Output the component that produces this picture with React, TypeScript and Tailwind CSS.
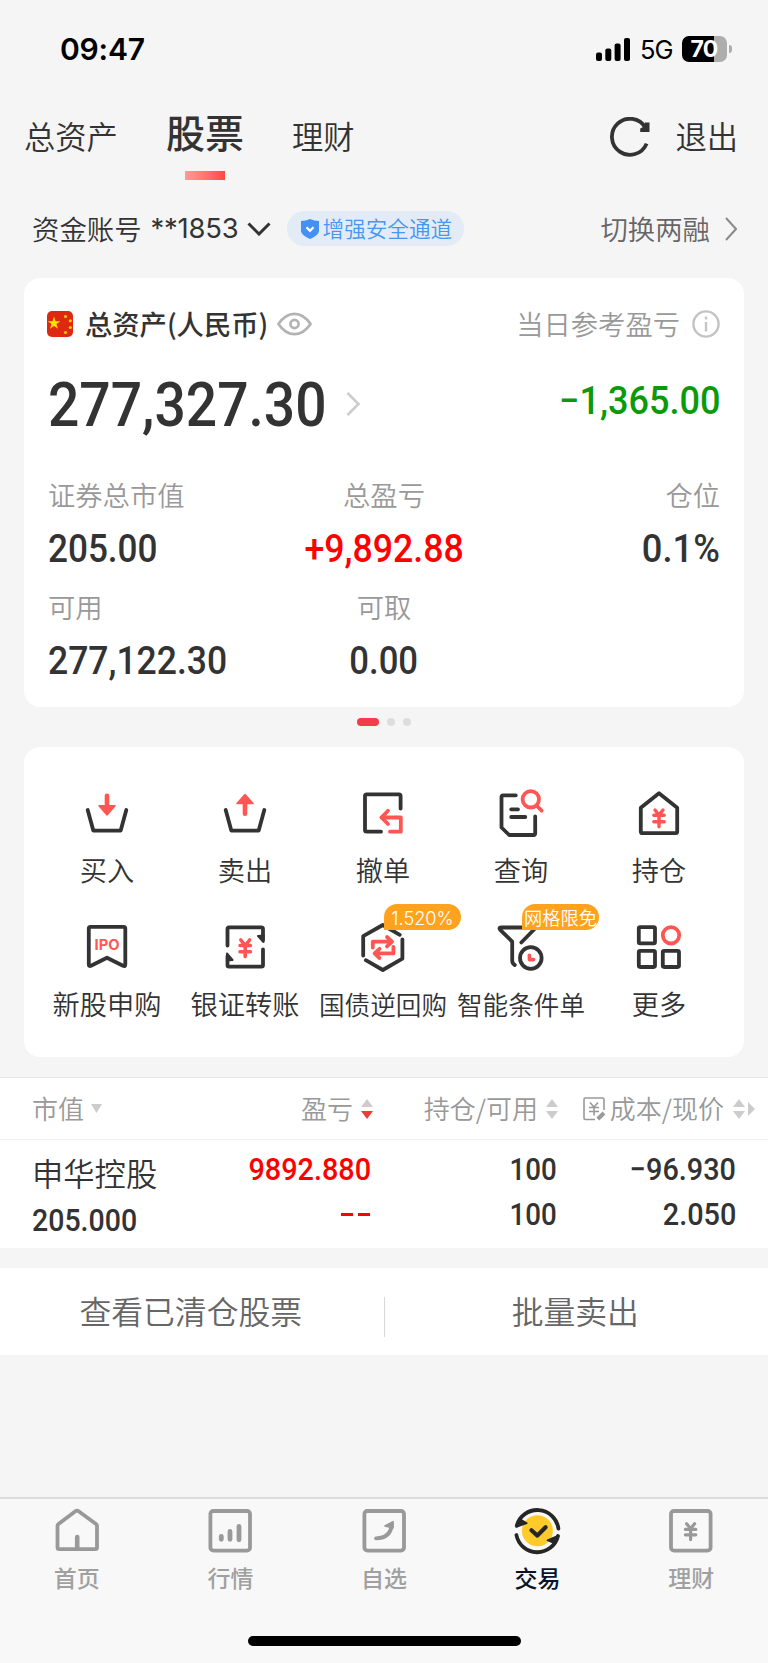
import React from 'react';
import clsx from 'clsx';

interface NumProps {
  value: string;
  className?: string;
}

interface Action {
  label: string;
  icon: React.ReactNode;
  badge?: string;
  compact?: boolean;
}

interface IconProps {
  children: React.ReactNode;
  className?: string;
}

const INK = '#333333';
const RED = '#ff5654';
const GRAY = '#999999';

// Narrow digits used for all amounts
const Num: React.FC<NumProps> = ({ value, className }) => (
  <span className={clsx('inline-block whitespace-nowrap font-[Roboto,sans-serif] font-medium leading-none', className)}>
    {value}
  </span>
);

const Icon: React.FC<IconProps> = ({ children, className }) => (
  <svg
    viewBox="0 0 48 48"
    fill="none"
    stroke={INK}
    strokeWidth="3.8"
    strokeLinecap="round"
    strokeLinejoin="round"
    className={clsx('h-12 w-12 shrink-0 overflow-visible', className)}
  >
    {children}
  </svg>
);

const actions: Action[] = [
  {
    label: '买入',
    icon: (
      <Icon>
        <path d="M4.7 22 L10.3 42.6 H37.7 L43.3 22" />
        <path d="M24 7.8 V18" stroke={RED} strokeWidth="4.6" />
        <path d="M16 17.8 H32 L24 27 Z" fill={RED} stroke={RED} strokeWidth="1.5" />
      </Icon>
    ),
  },
  {
    label: '卖出',
    icon: (
      <Icon>
        <path d="M4.7 22 L10.3 42.6 H37.7 L43.3 22" />
        <path d="M24 15 V25.7" stroke={RED} strokeWidth="4.6" />
        <path d="M16 15.5 H32 L24 6.5 Z" fill={RED} stroke={RED} strokeWidth="1.5" />
      </Icon>
    ),
  },
  {
    label: '撤单',
    icon: (
      <Icon>
        <path d="M41.6 20.5 V8 Q41.6 6.3 40 6.3 H7.7 Q6 6.3 6 8 V42 Q6 43.7 7.7 43.7 H22" />
        <path d="M22.5 29.5 H41.8 V43.7 H31" stroke={RED} />
        <path d="M29 22.8 L22.5 29.5 L29 36" stroke={RED} />
      </Icon>
    ),
  },
  {
    label: '查询',
    icon: (
      <Icon>
        <path d="M18.8 7.3 H6.2 Q4.5 7.3 4.5 9 V39.5 L12.2 47 H36.5 Q38.2 47 38.2 45.3 V28.5" />
        <path d="M14.2 21.3 H21 M14.2 29 H28.3" />
        <circle cx="33.8" cy="11.3" r="8.2" stroke={RED} />
        <path d="M40.1 18 L44.6 22.6" stroke={RED} />
      </Icon>
    ),
  },
  {
    label: '持仓',
    icon: (
      <Icon>
        <path d="M24 5.3 L42.2 19.7 V43.6 Q42.2 45.2 40.6 45.2 H7.4 Q5.8 45.2 5.8 43.6 V19.7 Z" />
        <path d="M20 22 L24 27 L28 22 M24 27 V38.8 M18.8 27.2 H29.2 M18.8 33.8 H29.2" stroke={RED} strokeWidth="3.4" />
      </Icon>
    ),
  },
  {
    label: '新股申购',
    icon: (
      <Icon>
        <path d="M7.5 4.8 H40.7 Q42.3 4.8 42.3 6.4 V42.5 Q42.3 44.8 40 43.8 L24 35.7 L8 43.8 Q5.8 44.8 5.8 42.5 V6.4 Q5.8 4.8 7.5 4.8 Z" />
        <text x="24" y="28" textAnchor="middle" fill={RED} stroke="none" fontFamily="Inter, sans-serif" fontSize="15" fontWeight="700" textLength="25" lengthAdjust="spacingAndGlyphs">
          IPO
        </text>
      </Icon>
    ),
  },
  {
    label: '银证转账',
    icon: (
      <Icon>
        <path d="M6.5 23.5 V7 Q6.5 5.4 8 5.4 H40.4 Q42 5.4 42 7 V18" />
        <path d="M42 27.5 V43 Q42 44.6 40.4 44.6 H8 Q6.5 44.6 6.5 43 V34" />
        <path d="M37 14 L42.5 13.5 V20 Z M11.5 38 L6 38.5 V31.5 Z" fill={INK} strokeWidth="2" />
        <path d="M19.8 18 L24.2 23.5 L28.6 18 M24.2 23 V34.6 M19 23.5 H29.4 M19 29.8 H29.4" stroke={RED} strokeWidth="3.6" />
      </Icon>
    ),
  },
  {
    label: '国债逆回购',
    badge: '1.520%',
    compact: true,
    icon: (
      <Icon>
        <path d="M4.2 33.5 V14.2 L23.8 3 L40.8 12.8" />
        <path d="M43.4 17.5 V36.6 L23.8 48 L6.8 38.2" />
        <path d="M13.8 25.6 V19.7 H32 M28 15 L33 19.7 L28 24.4" stroke={RED} strokeWidth="3.8" />
        <path d="M34.4 25 V31.4 H16.5 M20.5 26.8 L15.6 31.4 L20.5 36" stroke={RED} strokeWidth="3.8" />
      </Icon>
    ),
  },
  {
    label: '智能条件单',
    badge: '网格限免',
    compact: true,
    icon: (
      <Icon>
        <path d="M38.5 6 L24.3 20.5" />
        <path d="M38.5 5.5 H4 Q1.4 5.5 3.2 7.8 L15.2 19.6 V38.5 Q15.2 41.5 17.8 43" />
        <circle cx="33.8" cy="36" r="10.8" />
        <path d="M32.4 33.2 V37.6 H36.6" stroke={RED} strokeWidth="3.6" />
      </Icon>
    ),
  },
  {
    label: '更多',
    icon: (
      <Icon>
        <rect x="3.8" y="5.2" width="16.2" height="16.2" rx="1.4" />
        <rect x="3.8" y="28.8" width="16.2" height="16.2" rx="1.4" />
        <rect x="27.8" y="28.8" width="16.2" height="16.2" rx="1.4" />
        <circle cx="36" cy="13.3" r="8.2" stroke={RED} />
      </Icon>
    ),
  },
];

const tabs = [
  {
    label: '首页',
    icon: (
      <>
        <path d="M22.4 5.2 Q24 4 25.6 5.2 L43 18 Q44 18.8 44 20 V41.5 Q44 43.2 42.3 43.2 H6.2 Q4.5 43.2 4.5 41.5 V20 Q4.5 18.8 5.5 18 Z" />
        <path d="M24.2 31 V42" strokeWidth="4.6" />
      </>
    ),
  },
  {
    label: '行情',
    icon: (
      <>
        <rect x="4.4" y="5" width="39.6" height="39.6" rx="3" />
        <path d="M15.3 30.5 V33.3 M24 25.5 V33.3 M33 20.5 V33.8" strokeWidth="4.8" />
      </>
    ),
  },
  {
    label: '自选',
    icon: (
      <>
        <rect x="4.4" y="5" width="39.6" height="39.6" rx="3" />
        <path d="M16 32.3 C26.5 32 31.2 27 31.8 18.5" />
        <path d="M25 20 L33 15.6 V22 Z" fill={GRAY} strokeWidth="1.6" />
      </>
    ),
  },
  {
    label: '交易',
    active: true,
    icon: (
      <>
        <circle cx="23.4" cy="24.7" r="15.5" fill="#ffcb2b" stroke="none" />
        <g stroke="#262626">
          <path d="M2.8 19.5 A21.3 21.3 0 0 1 44.4 22.5" />
          <path d="M44 30 A21.3 21.3 0 0 1 2.4 29" />
          <path d="M2.2 21 L5.8 13 L12.8 17.2 Z M44.6 29.6 L41 37.4 L33.4 34.2 Z" fill="#262626" strokeWidth="1.6" />
          <path d="M17.4 24.3 L23.4 29.6 L31.6 21.3" strokeWidth="4.2" />
        </g>
      </>
    ),
  },
  {
    label: '理财',
    icon: (
      <>
        <rect x="4" y="5" width="39.6" height="39.6" rx="3" />
        <path d="M19.6 17.8 L23.6 22.6 L27.6 17.8 M23.6 22.6 V33.6 M18.4 23.4 H28.8 M18.4 28.8 H28.8" strokeWidth="3.2" />
      </>
    ),
  },
];

// Up/down sort arrows in the table header
const SortArrows: React.FC<{ active?: boolean }> = ({ active }) => (
  <svg viewBox="0 0 12 20" className="h-5 w-3 shrink-0">
    <path d="M6 0 L12 8 H0 Z" fill="#cccccc" />
    <path d="M6 20 L12 12 H0 Z" fill={active ? '#f03a3a' : '#cccccc'} />
  </svg>
);

const StatusBar = () => (
  <div className="flex h-[100px] shrink-0 items-center justify-between pl-[60px] pr-[36px] text-black">
    <span className="mb-[2px] font-[Inter,sans-serif] text-[30px] font-semibold leading-none tracking-[-0.2px]">09:47</span>
    <div className="mb-[2px] flex items-center">
      <svg viewBox="0 0 34 23" className="h-[23px] w-[34px]">
        <rect x="0" y="14.5" width="6" height="8.5" rx="2" />
        <rect x="9.3" y="10.5" width="6" height="12.5" rx="2" />
        <rect x="18.6" y="5.5" width="6" height="17.5" rx="2" />
        <rect x="28" y="0" width="6" height="23" rx="2" />
      </svg>
      <span className="ml-[10px] w-[33px] pt-px font-[Inter,sans-serif] text-[25.5px] font-normal leading-none tracking-[-1px]">5G</span>
      <div className="ml-[9px] flex h-[26px] w-[45px] items-center justify-center rounded-[7px] bg-linear-to-r from-black from-71% to-[#adadad] to-71%">
        <span className="-ml-px font-[Inter,sans-serif] text-[23px] font-bold leading-none tracking-[-0.8px] text-white">70</span>
      </div>
      <div className="ml-[2px] h-2 w-[3px] rounded-r-full bg-[#adadad]" />
    </div>
  </div>
);

const TopTabs = () => (
  <div className="flex h-20 shrink-0 items-start pl-[24px] pr-[30px] text-[31.3px] leading-none text-[#333]">
    <div className="flex h-[71px] items-center">总资产</div>
    <div className="ml-[48px] flex h-20 flex-col items-center justify-between">
      <div className="flex h-[62px] items-center text-[39px] font-medium">股票</div>
      <div className="h-[9px] w-10 bg-linear-to-r from-[#ff9a9a] to-[#ff4540]" />
    </div>
    <div className="ml-[48px] flex h-[71px] items-center">理财</div>
    <div className="ml-auto flex h-[73px] items-center gap-[25px]">
      <svg viewBox="0 0 40 40" fill="none" stroke={INK} strokeWidth="3.8" className="h-10 w-10">
        <path d="M36.6 26.6 A18 18 0 1 1 35.4 10.6" />
        <path d="M39.5 5.5 V15 H30.2 V11.6 L35 9 V5.5 Z" fill={INK} stroke="none" />
      </svg>
      <span className="mb-[2px]">退出</span>
    </div>
  </div>
);

const AccountRow = () => (
  <div className="flex h-[97px] shrink-0 items-center pl-[32px] pr-[31px] text-[27.4px] leading-none text-[#333]">
    <span>资金账号</span>
    <span className="ml-[9px] w-[90px] whitespace-nowrap pt-px font-[Inter,sans-serif] font-normal tracking-[-0.2px]">**1853</span>
    <svg viewBox="0 0 24 14" fill="none" stroke={INK} strokeWidth="3" className="ml-[6px] h-[14px] w-6">
      <path d="M1.5 1.5 L12 12 L22.5 1.5" />
    </svg>
    <div className="ml-[16px] flex h-[35px] w-[177px] items-center rounded-full bg-[#e3ebf6] pl-[14px] text-[21.6px] text-[#4796f2]">
      <svg viewBox="0 0 18 20" className="mr-[4px] h-5 w-[18px]">
        <path d="M9 0 Q13 2 18 2 V12 Q18 16 9 20 Q0 16 0 12 V2 Q5 2 9 0 Z" fill="#4490f3" />
        <path d="M5.5 8.2 L9 11.8 L12.5 8.2" fill="none" stroke="#fff" strokeWidth="2.2" />
      </svg>
      <span className="mb-px">增强安全通道</span>
    </div>
    <span className="ml-auto text-[#666]">切换两融</span>
    <svg viewBox="0 0 12 24" fill="none" stroke="#8a8a8a" strokeWidth="2" className="ml-[15px] h-6 w-3">
      <path d="M1 1 L11 12 L1 23" />
    </svg>
  </div>
);

const AssetCard = () => (
  <div className="mx-6 mt-px h-[429px] shrink-0 rounded-[16px] bg-white px-6 leading-none text-[#333]">
    <div className="flex h-[92px] items-center text-[27.3px]">
      <svg viewBox="0 0 26 26" className="-ml-px h-[26px] w-[26px]">
        <rect width="26" height="26" rx="5" fill="#de2810" />
        <path d="M7 5.5 L8.5 10.2 H13.4 L9.4 13 L11 17.8 L7 14.9 L3 17.8 L4.6 13 L0.6 10.2 H5.5 Z" fill="#ffde00" />
        <g fill="#f8c511">
          <circle cx="18.5" cy="5.5" r="1.6" />
          <circle cx="23.3" cy="9.8" r="1.6" />
          <circle cx="23.3" cy="16.5" r="1.6" />
          <circle cx="18.5" cy="21.5" r="1.6" />
        </g>
      </svg>
      <span className="ml-[12px] font-medium">总资产(人民币)</span>
      <svg viewBox="0 0 36 24" fill="none" stroke="#b3b3b3" strokeWidth="2.8" className="ml-[9px] h-6 w-[35px]">
        <path d="M1.5 12 Q8.5 1.5 18 1.5 T34.5 12 Q27.5 22.5 18 22.5 T1.5 12 Z" strokeLinejoin="round" />
        <circle cx="18" cy="12" r="4.2" />
      </svg>
      <span className="ml-auto text-[#999]">当日参考盈亏</span>
      <svg viewBox="0 0 28 28" fill="none" stroke="#c4c4c4" strokeWidth="2.4" className="ml-[12px] h-7 w-7">
        <circle cx="14" cy="14" r="12.6" />
        <path d="M14 12 V21.5 M14 6.5 V9.5" />
      </svg>
    </div>
    <div className="flex h-[66px] items-center">
      <Num value="277,327.30" className="mt-[3px] w-[298px] origin-left scale-x-[0.89] text-[62px]" />
      <svg viewBox="0 0 14 24" fill="none" stroke="#cccccc" strokeWidth="2.6" className="mt-[2px] h-6 w-[14px]">
        <path d="M1.5 1 L12.5 12 L1.5 23" />
      </svg>
      <Num value="−1,365.00" className="mb-[4px] ml-auto origin-right scale-x-[0.925] text-[39px] text-[#0a9a0a]" />
    </div>
    <div className="mt-[34px] grid grid-cols-[200px_1fr_200px] text-[27.3px] text-[#999]">
      <div className="flex h-[52px] items-center pb-[2px]">证券总市值</div>
      <div className="flex h-[52px] items-center justify-center pb-[2px]">总盈亏</div>
      <div className="flex h-[52px] items-center justify-end pb-[2px]">仓位</div>
      <div className="flex h-[50px] items-center pt-[4px] text-[#333]">
        <Num value="205.00" className="origin-left scale-x-[0.9] text-[39px]" />
      </div>
      <div className="flex h-[50px] items-center justify-center pt-[4px] text-[#ff0000]">
        <Num value="+9,892.88" className="scale-x-[0.915] text-[39px]" />
      </div>
      <div className="flex h-[50px] items-center justify-end pt-[4px] text-[#333]">
        <Num value="0.1%" className="origin-right scale-x-[0.93] text-[39px]" />
      </div>
      <div className="mt-[10px] flex h-[52px] items-center pb-[2px]">可用</div>
      <div className="col-span-2 mt-[10px] flex h-[52px] w-[272px] items-center justify-center pb-[2px]">可取</div>
      <div className="flex h-[50px] items-center pt-[4px] text-[#333]">
        <Num value="277,122.30" className="origin-left scale-x-[0.91] text-[39px]" />
      </div>
      <div className="flex h-[50px] items-center justify-center pt-[4px] text-[#333]">
        <Num value="0.00" className="scale-x-[0.89] text-[39px]" />
      </div>
    </div>
  </div>
);

const QuickActions = () => (
  <div className="mx-6 h-[310px] shrink-0 rounded-[16px] bg-white pl-[14px] pr-[16px] pt-[41px]">
    <div className="grid grid-cols-5">
      {actions.map((item) => (
        <div key={item.label} className="relative flex h-[134px] flex-col items-center">
          {item.icon}
          {item.badge && (
            <span className="absolute left-1/2 top-[-18px] ml-px flex h-[26px] w-[77px] items-center justify-center overflow-hidden whitespace-nowrap rounded-[13px] rounded-bl-none bg-[#ffa31f] pt-[2px] font-[Inter,'Noto_Sans_CJK_SC',sans-serif] text-[18.2px] leading-none text-white">
              {item.badge}
            </span>
          )}
          <span
            className={clsx(
              'mt-[15px] flex h-[37px] items-center whitespace-nowrap leading-none text-[#333]',
              item.compact ? 'text-[25.6px]' : 'text-[27.2px]'
            )}
          >
            {item.label}
          </span>
        </div>
      ))}
    </div>
  </div>
);

const Holdings = () => (
  <div className="mt-5 h-[171px] shrink-0 border-t border-[#e6e6e6] bg-white leading-none">
    <div className="grid h-[62px] grid-cols-[130px_211px_185px_197px] items-center border-b border-[#f0f0f0] pl-[32px] text-[26px] text-[#999]">
      <div className="flex items-center gap-[7px]">
        <span className="mb-[2px]">市值</span>
        <svg viewBox="0 0 11 9" className="h-[9px] w-[11px]">
          <path d="M0 0 H11 L5.5 9 Z" fill="#cccccc" />
        </svg>
      </div>
      <div className="flex items-center justify-end gap-[8px]">
        <span className="mb-[2px]">盈亏</span>
        <SortArrows active />
      </div>
      <div className="flex items-center justify-end gap-[8px]">
        <span className="mb-[2px]">持仓/可用</span>
        <SortArrows />
      </div>
      <div className="flex items-center justify-end whitespace-nowrap">
        <svg viewBox="0 0 24 24" fill="none" stroke="#999999" strokeWidth="1.6" className="mr-[3px] h-6 w-6">
          <path d="M12 22.5 H2.5 Q1 22.5 1 21 V2.5 Q1 1 2.5 1 H19.5 Q21 1 21 2.5 V13" />
          <path d="M7 5.5 L11 10 L15 5.5 M11 10 V18.5 M6 10.5 H16 M6 14.5 H16" />
          <path d="M14.8 22 L21 16" strokeWidth="4" />
        </svg>
        <span className="mb-[2px]">成本/现价</span>
        <span className="ml-[9px] flex items-center gap-[3px]">
          <SortArrows />
          <svg viewBox="0 0 7 14" className="h-[14px] w-[7px]">
            <path d="M0 0 L7 7 L0 14 Z" fill="#cccccc" />
          </svg>
        </span>
      </div>
    </div>
    <div className="grid grid-cols-[160px_179px_186px_179px] pl-[32px] pt-[7px] text-[#333]">
      <div className="flex flex-col">
        <span className="flex h-[53px] items-center pb-[2px] text-[31.3px]">申华控股</span>
        <span className="flex h-[42px] items-center">
          <Num value="205.000" className="origin-left scale-x-[0.905] text-[31.5px]" />
        </span>
      </div>
      <div className="flex flex-col items-end text-[#ff0000]">
        <span className="flex h-[46px] items-center">
          <Num value="9892.880" className="origin-right scale-x-[0.915] text-[31.5px]" />
        </span>
        <span className="mr-px flex h-[43px] items-center gap-[5px]">
          <i className="h-[3px] w-[12px] bg-[#ff0000]" />
          <i className="h-[3px] w-[12px] bg-[#ff0000]" />
        </span>
      </div>
      <div className="flex flex-col items-end">
        <span className="flex h-[46px] items-center">
          <Num value="100" className="origin-right scale-x-[0.88] text-[31.5px]" />
        </span>
        <span className="flex h-[44px] items-center">
          <Num value="100" className="origin-right scale-x-[0.88] text-[31.5px]" />
        </span>
      </div>
      <div className="flex flex-col items-end">
        <span className="flex h-[46px] items-center">
          <Num value="−96.930" className="origin-right scale-x-[0.915] text-[31.5px]" />
        </span>
        <span className="flex h-[44px] items-center">
          <Num value="2.050" className="origin-right scale-x-[0.915] text-[31.5px]" />
        </span>
      </div>
    </div>
  </div>
);

const BottomTabs = () => (
  <div className="mt-auto flex h-[166px] shrink-0 flex-col items-center border-t-2 border-[#dcdcdc] bg-[#f8f8f8]">
    <div className="grid w-full grid-cols-5 pt-[7px]">
      {tabs.map((tab) => (
        <div key={tab.label} className="flex flex-col items-center">
          <Icon className={tab.active ? '' : 'stroke-[#999]'}>{tab.icon}</Icon>
          <span
            className={clsx(
              'mt-[6px] flex h-[34px] items-center text-[23px] font-medium leading-none',
              tab.active ? 'text-[#0a1428]' : 'text-[#a0a0a0]'
            )}
          >
            {tab.label}
          </span>
        </div>
      ))}
    </div>
    <div className="mt-[42px] h-[10px] w-[273px] rounded-full bg-black" />
  </div>
);

export default function App() {
  return (
    <div className="flex h-[1663px] w-[768px] flex-col overflow-hidden bg-[#f5f5f5] font-['Noto_Sans_CJK_SC',sans-serif] font-[350]">
      <StatusBar />
      <TopTabs />
      <AccountRow />
      <AssetCard />
      {/* Carousel dots */}
      <div className="mb-[10px] flex h-[30px] shrink-0 items-center justify-center gap-2">
        <span className="h-2 w-[22px] rounded-full bg-[#f53c48]" />
        <span className="h-2 w-2 rounded-full bg-[#dddddd]" />
        <span className="h-2 w-2 rounded-full bg-[#dddddd]" />
      </div>
      <QuickActions />
      <Holdings />
      <div className="mt-5 flex h-[87px] shrink-0 items-center bg-white text-[31.8px] leading-none text-[#666]">
        <div className="flex-1 pb-[2px] pr-[2px] text-center">查看已清仓股票</div>
        <div className="mt-[11px] h-10 w-px bg-[#d8d8d8]" />
        <div className="flex-1 pb-[2px] pr-[2px] text-center">批量卖出</div>
      </div>
      <BottomTabs />
    </div>
  );
}
